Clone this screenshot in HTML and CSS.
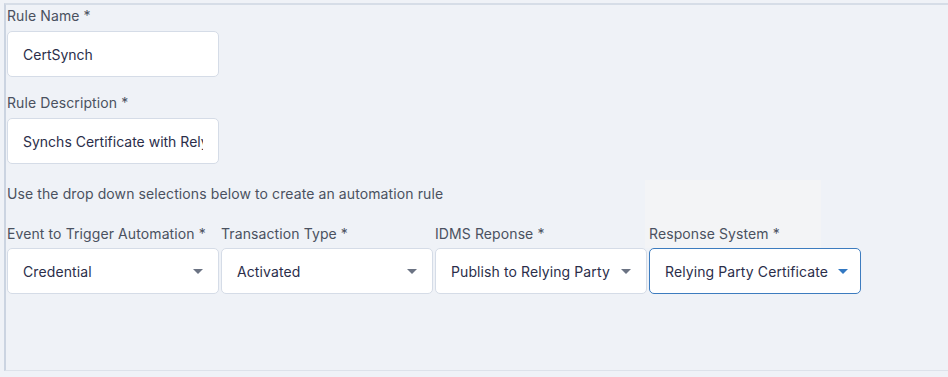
FILE: index.html
```html
<!DOCTYPE html>
<html>
<head>
    <title>Automation Rule</title>
    <link rel="stylesheet" href="styles.css">
</head>
<body>
    <div class="frame">
        <div class="ghost"></div>
        <div class="field">
            <label class="label">Rule Name *</label>
            <input class="input" type="text" value="CertSynch">
        </div>

        <div class="field">
            <label class="label">Rule Description *</label>
            <input class="input" type="text" value="Synchs Certificate with Relying Party">
        </div>

        <p class="hint">Use the drop down selections below to create an automation rule</p>

        <div class="row">
            <div class="field">
                <label class="label">Event to Trigger Automation *</label>
                <div class="select">
                    <span>Credential</span>
                    <svg class="caret" width="10" height="5" viewBox="0 0 10 5"><path d="M0 0h10L5 5z"/></svg>
                </div>
            </div>
            <div class="field">
                <label class="label">Transaction Type *</label>
                <div class="select">
                    <span>Activated</span>
                    <svg class="caret" width="10" height="5" viewBox="0 0 10 5"><path d="M0 0h10L5 5z"/></svg>
                </div>
            </div>
            <div class="field">
                <label class="label">IDMS Reponse *</label>
                <div class="select">
                    <span>Publish to Relying Party</span>
                    <svg class="caret" width="10" height="5" viewBox="0 0 10 5"><path d="M0 0h10L5 5z"/></svg>
                </div>
            </div>
            <div class="field">
                <label class="label">Response System *</label>
                <div class="select focused">
                    <span>Relying Party Certificate</span>
                    <svg class="caret" width="10" height="5" viewBox="0 0 10 5"><path d="M0 0h10L5 5z"/></svg>
                </div>
            </div>
        </div>
    </div>
</body>
</html>
```

FILE: styles.css
```css
html, body { margin: 0; height: 100%; }
body { font-family: Inter, "Noto Sans", sans-serif; font-size: 14px; letter-spacing: 0.1px; background: #eff2f7; overflow: hidden; }
.frame { position: relative; margin: 3px 0 0 4px; height: 368px; border-top: 2px solid #d6dde7; border-left: 2px solid #cbd4e1; border-bottom: 1px solid #dde2ea; padding: 1px 0 0 1px; box-sizing: border-box; }
.ghost { position: absolute; left: 639px; top: 175px; width: 176px; height: 68px; background: #f3f4f6; }
.field { position: relative; display: flex; flex-direction: column; width: 212px; margin-bottom: 16px; }
.label { line-height: 20px; color: #4a5160; margin-bottom: 5px; white-space: nowrap; }
.input { height: 46px; box-sizing: border-box; border: 1px solid #d5dce7; border-radius: 5px; background: #fff; padding: 0 15px; font: inherit; color: #2b2e4a; outline: none; }
.hint { position: relative; margin: 20px 0 0; line-height: 20px; color: #4a5160; }
.row { display: flex; gap: 2px; margin-top: 20px; }
.row .field { margin-bottom: 0; }
.row .label { margin-bottom: 4px; }
.select { height: 46px; box-sizing: border-box; border: 1px solid #d5dce7; border-radius: 5px; background: #fff; padding: 0 15px; display: flex; align-items: center; justify-content: space-between; color: #2b2e4a; white-space: nowrap; }
.caret { fill: #6b7383; flex: none; margin-left: 10px; }
.select.focused { border-color: #3d7cbf; }
.select.focused .caret { fill: #3278c2; }
```
